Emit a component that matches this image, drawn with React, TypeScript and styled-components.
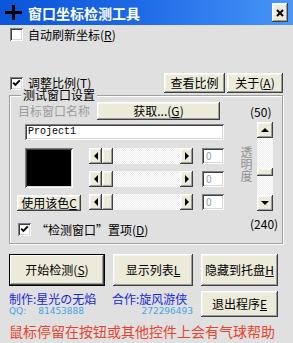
import React from 'react';
import styled, { createGlobalStyle, css } from 'styled-components';

const GlobalStyle = createGlobalStyle`
  html, body {
    margin: 0;
    padding: 0;
    background: #e0e0e0;
  }
  * {
    box-sizing: border-box;
  }
`;

const FONT = `"Noto Sans CJK SC", "DejaVu Sans", sans-serif`;

const raised = css`
  background: #ecead9;
  box-shadow: inset -1px -1px #404040, inset 1px 1px #ffffff,
    inset -2px -2px #9c9c9c, inset 2px 2px #f6f5ee;
`;

const sunken = css`
  background: #ffffff;
  box-shadow: inset 1px 1px #808080, inset -1px -1px #ffffff,
    inset 2px 2px #404040, inset -2px -2px #d8d8d8;
`;

const Window = styled.div`
  width: 293px;
  height: 343px;
  display: flex;
  flex-direction: column;
  background: #e0e0e0;
  font-family: ${FONT};
  font-size: 12px;
  line-height: 14px;
  color: #000;
  overflow: hidden;
`;

const TitleBar = styled.div`
  height: 25px;
  flex: none;
  display: flex;
  align-items: center;
  padding: 0 5px;
  background: linear-gradient(
    to right,
    #0a55d9 0%,
    #1c68e5 45%,
    #3786f2 80%,
    #4b98f8 100%
  );
`;

const TitleText = styled.span`
  margin-left: 6px;
  color: #fff;
  font-size: 14px;
  font-weight: bold;
`;

const CloseButton = styled.div`
  margin-left: auto;
  width: 16px;
  height: 19px;
  display: flex;
  align-items: center;
  justify-content: center;
  ${raised}
`;

const Body = styled.div`
  flex: 1;
  display: flex;
  flex-direction: column;
  padding: 3px 10px 0 9px;
`;

const CheckRow = styled.label`
  display: flex;
  align-items: center;
  gap: 5px;
  margin-left: 1px;
  line-height: 12px;
  white-space: nowrap;
`;

const Box = styled.span`
  width: 13px;
  height: 13px;
  flex: none;
  display: flex;
  align-items: center;
  justify-content: center;
  ${sunken}
`;

const ScaleRow = styled.div`
  margin-top: 32px;
  height: 20px;
  display: flex;
  align-items: center;
`;

const ButtonPair = styled.div`
  margin-left: auto;
  display: flex;
  gap: 2px;
`;

const Button = styled.div<{ $w: number; $h: number; $default?: boolean }>`
  width: ${(p) => p.$w}px;
  height: ${(p) => p.$h}px;
  display: flex;
  align-items: center;
  justify-content: center;
  white-space: nowrap;
  ${raised}
  ${(p) =>
    p.$default &&
    css`
      box-shadow: inset 0 0 0 1px #000, inset -2px -2px #404040,
        inset 2px 2px #ffffff, inset -3px -3px #9c9c9c;
    `}
`;

const Group = styled.fieldset`
  margin: -4px 0 0 0;
  width: 274px;
  min-width: 0;
  padding: 0 0 7px 7px;
  border: 1px solid #a0a0a0;
  box-shadow: inset 1px 1px 0 #ffffff, 1px 1px 0 #ffffff;
`;

const Legend = styled.legend`
  margin-left: 4px;
  padding: 0 2px;
  line-height: 12px;
  background: #e0e0e0;
`;

const GroupInner = styled.div`
  display: flex;
`;

const LeftCol = styled.div`
  width: 208px;
  display: flex;
  flex-direction: column;
`;

const NameRow = styled.div`
  margin-top: 1px;
  height: 18px;
  display: flex;
  align-items: center;
`;

const DimLabel = styled.span`
  width: 80px;
  padding-left: 1px;
  color: #9c9c9c;
`;

const TextInput = styled.div`
  margin: 4px 0 0 8px;
  width: 199px;
  height: 16px;
  padding: 1px 0 0 3px;
  font-family: "Liberation Mono", "DejaVu Sans Mono", monospace;
  font-size: 10px;
  line-height: 14px;
  ${sunken}
`;

const ColorRow = styled.div`
  margin-top: 8px;
  display: flex;
`;

const ColorCol = styled.div`
  width: 64px;
  display: flex;
  flex-direction: column;
`;

const Swatch = styled.div<{ $color: string }>`
  margin-left: 8px;
  width: 48px;
  height: 40px;
  background: ${(p) => p.$color};
  box-shadow: inset 1px 1px #808080, inset -1px -1px #ffffff,
    inset 2px 2px #404040, inset -2px -2px #d8d8d8;
`;

const SliderCol = styled.div`
  margin-left: 8px;
  display: flex;
  flex-direction: column;
  gap: 7px;
`;

const SliderRow = styled.div`
  height: 16px;
  display: flex;
  align-items: center;
  gap: 9px;
`;

const HScroll = styled.div`
  width: 104px;
  height: 16px;
  display: flex;
`;

const ArrowButton = styled.div<{ $w: number; $h: number }>`
  width: ${(p) => p.$w}px;
  height: ${(p) => p.$h}px;
  flex: none;
  display: flex;
  align-items: center;
  justify-content: center;
  ${raised}
`;

const Track = styled.div<{ $vertical?: boolean }>`
  flex: 1;
  display: flex;
  flex-direction: ${(p) => (p.$vertical ? 'column' : 'row')};
  background: repeating-conic-gradient(#ffffff 0 25%, #ececec 0 50%) 0 0 / 2px
    2px;
`;

const NumBox = styled.div`
  width: 22px;
  height: 16px;
  padding: 1px 0 0 4px;
  font-size: 10px;
  line-height: 14px;
  color: #8c9cb4;
  ${sunken}
`;

const TopRow = styled.div`
  margin-top: 12px;
`;

const RightCol = styled.div`
  margin-left: 15px;
  display: flex;
  flex-direction: column;
`;

const RangeText = styled.span<{ $gap: number }>`
  margin-top: ${(p) => p.$gap}px;
  padding-left: 10px;
  white-space: nowrap;
`;

const AlphaRow = styled.div`
  margin-top: 3px;
  display: flex;
`;

const VText = styled.span`
  margin-top: 24px;
  width: 13px;
  writing-mode: vertical-rl;
  line-height: 13px;
  color: #909090;
`;

const VScroll = styled.div`
  margin-left: 4px;
  width: 16px;
  height: 89px;
  display: flex;
  flex-direction: column;
`;

const ActionGrid = styled.div`
  margin-top: 10px;
  display: grid;
  grid-template-columns: 96px 80px 77px;
  grid-template-rows: 32px 26px;
  column-gap: 8px;
  row-gap: 5px;
`;

const Credits = styled.div`
  grid-column: 1 / 3;
  padding-top: 1px;
  display: flex;
  flex-direction: column;
`;

const CreditLine = styled.div`
  display: flex;
  color: #1a28d8;
  white-space: nowrap;
`;

const CreditCell = styled.span<{ $w: number }>`
  width: ${(p) => p.$w}px;
`;

const QQLine = styled.div`
  display: flex;
  font-family: "DejaVu Sans", sans-serif;
  font-size: 9px;
  line-height: 10px;
  color: #45a2e6;
  white-space: nowrap;
`;

const Help = styled.div`
  margin-top: 6px;
  font-size: 14px;
  line-height: 16px;
  color: #e5452f;
  white-space: nowrap;
`;

const Check = ({ checked }: { checked: boolean }) => (
  <Box>
    {checked && (
      <svg width='9' height='9' viewBox='0 0 9 9'>
        <path
          d='M1.2 3.6 L3.4 5.9 L7.8 1.4'
          stroke='#000'
          strokeWidth='1.9'
          fill='none'
        />
      </svg>
    )}
  </Box>
);

const Arrow = ({ dir }: { dir: 'left' | 'right' | 'up' | 'down' }) => {
  const points = {
    left: '4,0 4,8 0,4',
    right: '0,0 0,8 4,4',
    up: '0,4 8,4 4,0',
    down: '0,0 8,0 4,4',
  }[dir];
  const horizontal = dir === 'left' || dir === 'right';
  return (
    <svg
      width={horizontal ? 4 : 8}
      height={horizontal ? 8 : 4}
      viewBox={horizontal ? '0 0 4 8' : '0 0 8 4'}
    >
      <polygon points={points} fill='#000' />
    </svg>
  );
};

const Key = ({ k, paren = true }: { k: string; paren?: boolean }) =>
  paren ? (
    <>
      (<u>{k}</u>)
    </>
  ) : (
    <u>{k}</u>
  );

const Slider = () => (
  <SliderRow>
    <HScroll>
      <ArrowButton $w={13} $h={16}>
        <Arrow dir='left' />
      </ArrowButton>
      <ArrowButton $w={11} $h={16} />
      <Track />
      <ArrowButton $w={13} $h={16}>
        <Arrow dir='right' />
      </ArrowButton>
    </HScroll>
    <NumBox>0</NumBox>
  </SliderRow>
);

export default function App() {
  const alpha = 165;
  const thumbTop = Math.round(((alpha - 50) / 190) * 50);

  return (
    <Window>
      <GlobalStyle />
      <TitleBar>
        <svg width='17' height='15' viewBox='0 0 17 15'>
          <rect x='0' y='6' width='17' height='3' fill='#000' />
          <rect x='7' y='0' width='3' height='15' fill='#000' />
        </svg>
        <TitleText>窗口坐标检测工具</TitleText>
        <CloseButton>
          <svg width='8' height='8' viewBox='0 0 8 8'>
            <path d='M1 1 L7 7 M7 1 L1 7' stroke='#000' strokeWidth='2' />
          </svg>
        </CloseButton>
      </TitleBar>
      <Body>
        <CheckRow>
          <Check checked={false} />
          <span>
            自动刷新坐标<Key k='R' />
          </span>
        </CheckRow>
        <ScaleRow>
          <CheckRow>
            <Check checked />
            <span>
              调整比例<Key k='T' />
            </span>
          </CheckRow>
          <ButtonPair>
            <Button $w={61} $h={20}>
              查看比例
            </Button>
            <Button $w={56} $h={20}>
              关于<Key k='A' />
            </Button>
          </ButtonPair>
        </ScaleRow>
        <Group>
          <Legend>测试窗口设置</Legend>
          <GroupInner>
            <LeftCol>
              <NameRow>
                <DimLabel>目标窗口名称</DimLabel>
                <Button $w={123} $h={18}>
                  获取...<Key k='G' />
                </Button>
              </NameRow>
              <TextInput>Project1</TextInput>
              <ColorRow>
                <ColorCol>
                  <Swatch $color='#000000' />
                  <Button $w={64} $h={16} style={{ marginTop: 7 }}>
                    使用该色<Key k='C' paren={false} />
                  </Button>
                </ColorCol>
                <SliderCol>
                  <Slider />
                  <Slider />
                  <Slider />
                </SliderCol>
              </ColorRow>
              <TopRow>
                <CheckRow>
                  <Check checked />
                  <span>
                    “检测窗口”置项<Key k='D' />
                  </span>
                </CheckRow>
              </TopRow>
            </LeftCol>
            <RightCol>
              <RangeText $gap={4}>(50)</RangeText>
              <AlphaRow>
                <VText>透明度</VText>
                <VScroll>
                  <ArrowButton $w={16} $h={16}>
                    <Arrow dir='up' />
                  </ArrowButton>
                  <Track $vertical>
                    <ArrowButton
                      $w={16}
                      $h={8}
                      style={{ marginTop: thumbTop }}
                    />
                  </Track>
                  <ArrowButton $w={16} $h={16}>
                    <Arrow dir='down' />
                  </ArrowButton>
                </VScroll>
              </AlphaRow>
              <RangeText $gap={6}>(240)</RangeText>
            </RightCol>
          </GroupInner>
        </Group>
        <ActionGrid>
          <Button $w={96} $h={32} $default>
            开始检测<Key k='S' />
          </Button>
          <Button $w={80} $h={32}>
            显示列表<Key k='L' paren={false} />
          </Button>
          <Button $w={77} $h={32}>
            隐藏到托盘<Key k='H' paren={false} />
          </Button>
          <Credits>
            <CreditLine>
              <CreditCell $w={103}>制作:星光の无焰</CreditCell>
              <span>合作:旋风游侠</span>
            </CreditLine>
            <QQLine>
              <CreditCell $w={30}>QQ:</CreditCell>
              <CreditCell $w={106}>81453888</CreditCell>
              <span>272296493</span>
            </QQLine>
          </Credits>
          <Button $w={77} $h={26}>
            退出程序<Key k='E' paren={false} />
          </Button>
        </ActionGrid>
        <Help>鼠标停留在按钮或其他控件上会有气球帮助</Help>
      </Body>
    </Window>
  );
}
